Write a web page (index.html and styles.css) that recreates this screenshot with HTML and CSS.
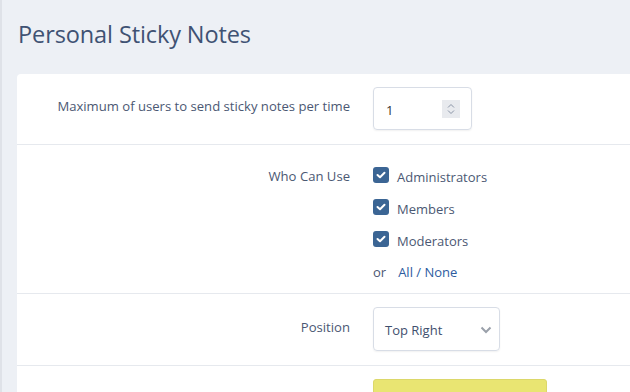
FILE: index.html
```html
<!DOCTYPE html>
<html>
<head>
<meta charset="utf-8">
<link rel="stylesheet" href="styles.css">
</head>
<body>
<div class="page">
  <h1 class="title">Personal Sticky Notes</h1>
  <div class="card">
    <div class="row row-max">
      <div class="label">Maximum of users to send sticky notes per time</div>
      <div class="control">
        <div class="number">
          <span class="num-val">1</span>
          <span class="spin">
            <svg width="10" height="14" viewBox="0 0 10 14"><path d="M2 5.5 L5 2.5 L8 5.5" fill="none" stroke="#8a94a6" stroke-width="1"/><path d="M2 8.5 L5 11.5 L8 8.5" fill="none" stroke="#8a94a6" stroke-width="1"/></svg>
          </span>
        </div>
      </div>
    </div>
    <div class="row row-who">
      <div class="label">Who Can Use</div>
      <div class="control checks">
        <div class="check"><span class="box"><svg width="10" height="8" viewBox="0 0 10 8"><path d="M1.5 4 L4 6.3 L8.5 1.7" fill="none" stroke="#fff" stroke-width="2" stroke-linecap="round" stroke-linejoin="round"/></svg></span><span class="ctext">Administrators</span></div>
        <div class="check"><span class="box"><svg width="10" height="8" viewBox="0 0 10 8"><path d="M1.5 4 L4 6.3 L8.5 1.7" fill="none" stroke="#fff" stroke-width="2" stroke-linecap="round" stroke-linejoin="round"/></svg></span><span class="ctext">Members</span></div>
        <div class="check"><span class="box"><svg width="10" height="8" viewBox="0 0 10 8"><path d="M1.5 4 L4 6.3 L8.5 1.7" fill="none" stroke="#fff" stroke-width="2" stroke-linecap="round" stroke-linejoin="round"/></svg></span><span class="ctext">Moderators</span></div>
        <div class="allnone"><span class="or">or</span><a class="link">All</a><span class="link"> / </span><a class="link">None</a></div>
      </div>
    </div>
    <div class="row row-pos">
      <div class="label">Position</div>
      <div class="control">
        <div class="select">
          <span>Top Right</span>
          <svg width="12" height="8" viewBox="0 0 12 8"><path d="M1.5 1.5 L6 6 L10.5 1.5" fill="none" stroke="#9aa0aa" stroke-width="2"/></svg>
        </div>
      </div>
    </div>
    <div class="row row-color">
      <div class="label"></div>
      <div class="control">
        <div class="swatch"></div>
      </div>
    </div>
  </div>
</div>
</body>
</html>
```
FILE: styles.css
```css
html, body {
  margin: 0;
  padding: 0;
  height: 100%;
  overflow: hidden;
}
body {
  background: #edf0f5;
  font-family: "Open Sans", "Noto Sans", sans-serif;
  color: #4b5873;
}
.page {
  border-left: 2px solid #dfe2e8;
  height: 100%;
  padding-left: 15px;
  overflow: hidden;
}
.title {
  margin: 0;
  padding: 19px 0 0 1px;
  height: 74px;
  box-sizing: border-box;
  font-weight: 400;
  font-size: 23.5px;
  line-height: 30px;
  color: #3f5273;
  letter-spacing: -0.1px;
}
.card {
  background: #fff;
  border-top-left-radius: 4px;
  margin-right: -10px;
  height: calc(100vh - 74px);
  overflow: hidden;
}
.row {
  display: flex;
  border-bottom: 1px solid #e6e9ee;
  box-sizing: border-box;
}
.label {
  width: 333px;
  flex: none;
  text-align: right;
  font-size: 13.1px;
  line-height: 18px;
  color: #4b5873;
}
.control {
  margin-left: 23px;
}
.row-max {
  height: 71px;
}
.row-max .label { padding-top: 23px; }
.row-max .control { padding-top: 13px; }
.number {
  box-sizing: border-box;
  width: 99px;
  height: 43px;
  border: 1px solid #d8dde6;
  border-radius: 4px;
  box-shadow: 0 1px 2px rgba(0,0,0,0.06);
  display: flex;
  align-items: center;
  justify-content: space-between;
  padding: 0 11px 0 12px;
}
.num-val {
  font-size: 13px;
  color: #333;
  padding-top: 2px;
}
.spin {
  width: 18px;
  height: 18px;
  background: #e8eaee;
  display: flex;
  align-items: center;
  justify-content: center;
}
.row-who {
  height: 149px;
}
.row-who .label { padding-top: 22px; }
.checks {
  padding-top: 14px;
}
.check {
  display: flex;
  align-items: center;
  height: 32px;
}
.box {
  width: 16px;
  height: 16px;
  border-radius: 3px;
  background: #3b6594;
  display: flex;
  align-items: center;
  justify-content: center;
  margin-right: 8px;
}
.ctext {
  font-size: 13px;
  color: #4b5873;
  margin-top: 4px;
}
.allnone {
  font-size: 13px;
  color: #4b5873;
  height: 28px;
  line-height: 28px;
  margin-top: 3px;
}
.or { margin-right: 12px; }
.link { color: #2d5c9f; text-decoration: none; }
.row-pos {
  height: 72px;
}
.row-pos .label { padding-top: 24px; }
.row-pos .control { padding-top: 13px; }
.select {
  width: 127px;
  height: 44px;
  box-sizing: border-box;
  border: 1px solid #d8dde6;
  border-radius: 4px;
  box-shadow: 0 1px 2px rgba(0,0,0,0.06);
  display: flex;
  align-items: center;
  justify-content: space-between;
  padding: 2px 7px 0 11px;
  font-size: 13px;
  color: #3f4f6e;
}
.row-color {
  height: 60px;
  border-bottom: none;
}
.row-color .control { padding-top: 13px; }
.swatch {
  box-sizing: border-box;
  width: 174px;
  height: 40px;
  background: #e9e572;
  border: 1px solid #dcd86a;
  border-radius: 3px;
}
```
